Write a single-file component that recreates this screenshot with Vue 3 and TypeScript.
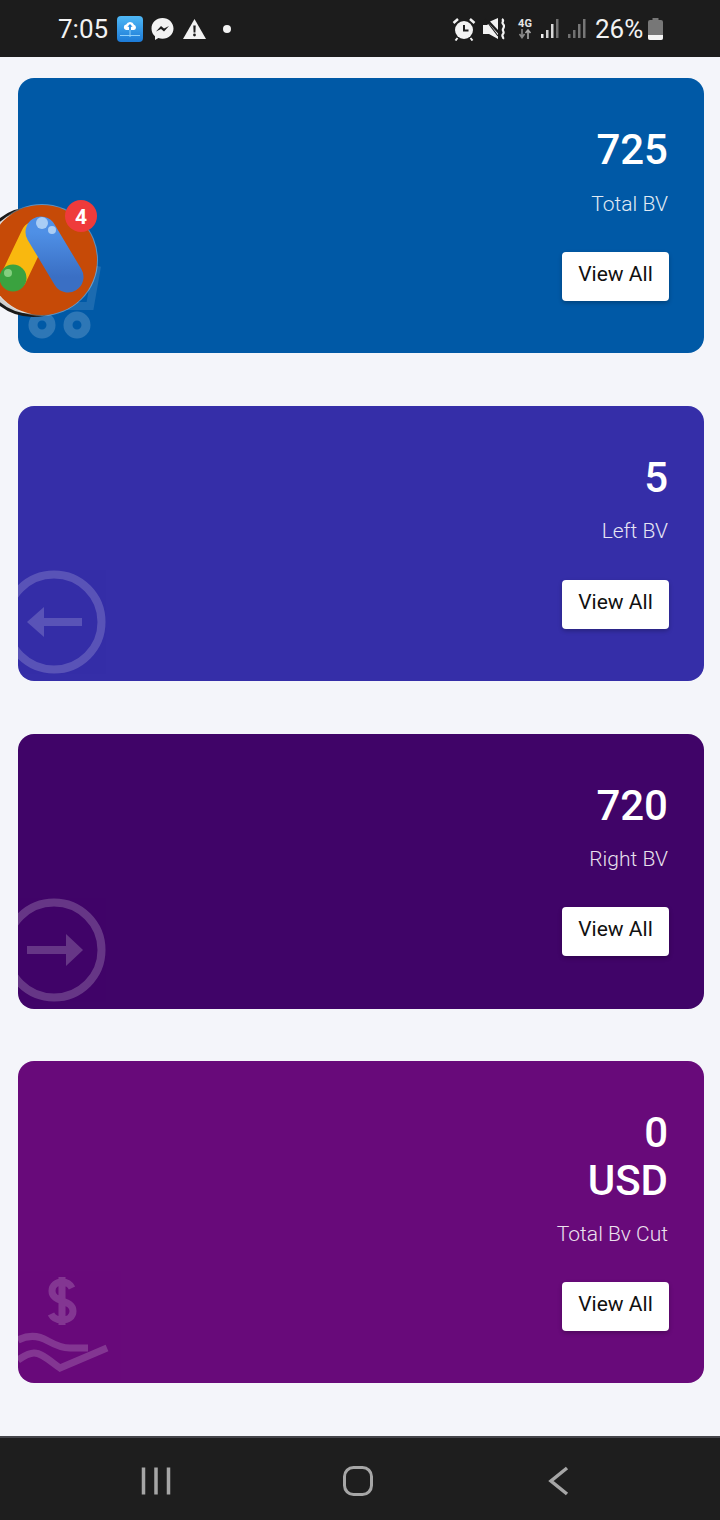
<script setup lang="ts">
interface Card {
  value: string[]
  label: string
  tone: string
  icon: 'cart' | 'left' | 'right' | 'money'
}
const cards: Card[] = [
  { value: ['725'], label: 'Total BV', tone: 'blue', icon: 'cart' },
  { value: ['5'], label: 'Left BV', tone: 'indigo', icon: 'left' },
  { value: ['720'], label: 'Right BV', tone: 'plum', icon: 'right' },
  { value: ['0', 'USD'], label: 'Total Bv Cut', tone: 'purple', icon: 'money' },
]
</script>

<template>
  <div class="screen">
    <header class="status">
      <div class="group left-group">
        <span class="clock">7:05</span>
        <svg class="ic-cloud" width="26" height="26" viewBox="0 0 26 26">
          <defs>
            <linearGradient id="cl" x1="0" y1="0" x2="0" y2="1">
              <stop offset="0" stop-color="#4fb8f6" />
              <stop offset="1" stop-color="#1c7ad6" />
            </linearGradient>
          </defs>
          <rect width="26" height="26" rx="4" fill="url(#cl)" />
          <path d="M9 14a2.800 2.800 0 0 1 .2-5.500A4.200 4.200 0 0 1 17 8.800a2.700 2.700 0 0 1 0 5.200z" fill="#fff" />
          <path d="M13 8l-2.600 2.800h1.700V14h1.800v-3.200h1.700z" fill="#2a8fe4" />
          <path d="M13 14v7M3 19.500h20" stroke="#8fd0fa" stroke-width="1" fill="none" />
        </svg>
        <svg class="ic-msg" width="23" height="24" viewBox="0 0 23 24">
          <path d="M11.500 1C5.300 1 .5 5.500.5 11.500c0 3.200 1.300 5.900 3.500 7.800V23l3.400-1.900c1.300.4 2.700.6 4.100.6 6.200 0 11-4.500 11-10.200S17.700 1 11.500 1z" fill="#f2f2f2" />
          <path d="M5 14.500l5-5.500 3 2.500 5-2.500-5 5.500-3-2.500z" fill="#1c1c1c" />
        </svg>
        <svg class="ic-warn" width="23" height="20" viewBox="0 0 23 20">
          <path d="M11.500 0L23 20H0z" fill="#f2f2f2" />
          <path d="M10.300 6.500h2.400l-.3 7h-1.800z" fill="#1c1c1c" />
          <circle cx="11.500" cy="16" r="1.400" fill="#1c1c1c" />
        </svg>
        <span class="dot"></span>
      </div>
      <div class="group right-group">
        <svg class="ic-alarm" width="24" height="24" viewBox="0 0 24 24">
          <circle cx="12" cy="13" r="9" fill="#f2f2f2" />
          <path d="M12 8v5.500h4.500" stroke="#1c1c1c" stroke-width="2" fill="none" />
          <path d="M1.500 6L6 2M22.500 6L18 2" stroke="#f2f2f2" stroke-width="2.500" fill="none" />
          <path d="M5.500 21l-2 2.500M18.500 21l2 2.500" stroke="#f2f2f2" stroke-width="2" fill="none" />
        </svg>
        <svg class="ic-mute" width="22" height="22" viewBox="0 0 22 22">
          <path d="M0 7h4L6 5.500l9 10V21L6 16H0z" fill="#f2f2f2" />
          <path d="M7 3.500L15 0v12z" fill="#f2f2f2" />
          <path d="M2 1l13 17" stroke="#1c1c1c" stroke-width="1.200" />
          <path d="M19 1c3 2-1 3 1 5s1 3 0 5 2 3 0 5 1 3 0 5" stroke="#f2f2f2" stroke-width="2.200" fill="none" />
        </svg>
        <div class="net">
          <span class="net-label">4G</span>
          <svg width="16" height="10" viewBox="0 0 16 10">
            <path d="M5 0v7M2.500 5L5 8.500 7.500 5" stroke="#8a8a8a" stroke-width="1.600" fill="none" />
            <path d="M11 10V2M8.500 4L11 1l2.500 3" stroke="#a8a8a8" stroke-width="1.600" fill="none" />
          </svg>
        </div>
        <svg class="ic-signal" width="19" height="21" viewBox="0 0 19 21">
          <rect x="0" y="16" width="2.500" height="4" fill="#f2f2f2" />
          <rect x="5" y="12" width="2.500" height="8" fill="#d0d0d0" />
          <rect x="10" y="6" width="2.500" height="14" fill="#d8d8d8" />
          <rect x="15" y="1" width="2.500" height="19" fill="#707070" />
        </svg>
        <svg class="ic-signal2" width="19" height="21" viewBox="0 0 19 21">
          <rect x="0" y="16" width="2.500" height="4" fill="#707070" />
          <rect x="5" y="12" width="2.500" height="8" fill="#707070" />
          <rect x="10" y="6" width="2.500" height="14" fill="#777" />
          <rect x="15" y="1" width="2.500" height="19" fill="#777" />
        </svg>
        <span class="pct">26%</span>
        <svg class="ic-batt" width="15" height="22" viewBox="0 0 15 22">
          <path d="M4.500 0h6v2h2.500a2 2 0 0 1 2 2v16a2 2 0 0 1-2 2H2a2 2 0 0 1-2-2V4a2 2 0 0 1 2-2h2.500z" fill="#777" />
          <path d="M0 17h15v3a2 2 0 0 1-2 2H2a2 2 0 0 1-2-2z" fill="#f4f4f4" />
        </svg>
      </div>
    </header>

    <main class="content">
      <section v-for="c in cards" :key="c.label" class="card" :class="c.tone">
        <svg v-if="c.icon === 'cart'" class="watermark cart" width="90" height="100" viewBox="0 0 90 100">
          <path d="M79 26l-7 40H20" stroke="#fff" stroke-opacity="0.6" stroke-width="8" fill="none" />
          <circle cx="24" cy="85" r="9" stroke="#fff" stroke-width="9" fill="none" />
          <circle cx="59" cy="85" r="9" stroke="#fff" stroke-width="9" fill="none" />
        </svg>
        <svg v-else-if="c.icon === 'left'" class="watermark arrow" width="104" height="104" viewBox="0 0 104 104">
          <circle cx="52" cy="52" r="47.500" stroke="#fff" stroke-width="8" fill="none" />
          <path d="M40 52h40" stroke="#fff" stroke-width="8" fill="none" />
          <path d="M25 52l17-15v30z" fill="#fff" />
        </svg>
        <svg v-else-if="c.icon === 'right'" class="watermark arrow" width="104" height="104" viewBox="0 0 104 104">
          <circle cx="52" cy="52" r="47.500" stroke="#fff" stroke-width="8" fill="none" />
          <path d="M25 52h40" stroke="#fff" stroke-width="8" fill="none" />
          <path d="M81 52L64 36v32z" fill="#fff" />
        </svg>
        <svg v-else class="watermark money" width="108" height="100" viewBox="0 0 108 100">
          <path d="M54 11c-2-4-5-6-10-6s-10 3-10 9c0 12 21 8 21 20 0 6-5 9-11 9s-9-2-11-6M44 0v48" stroke="#fff" stroke-width="7" fill="none" />
          <path d="M0 63c10-5 20-5 30 1 9 5 16 7 22 7h18" stroke="#fff" stroke-width="7" fill="none" />
          <path d="M0 83c6-4 11-7 16-7 8 0 16 8 26 15l47-20" stroke="#fff" stroke-width="7" fill="none" />
        </svg>

        <div class="value">
          <div v-for="v in c.value" :key="v">{{ v }}</div>
        </div>
        <div class="label">{{ c.label }}</div>
        <button class="view" type="button">View All</button>
      </section>
    </main>

    <nav class="nav">
      <svg width="30" height="30" viewBox="0 0 30 30">
        <path d="M2.500 1.500v27M15 1.500v27M27.500 1.500v27" stroke="#a6a6a6" stroke-width="3.500" fill="none" />
      </svg>
      <svg width="30" height="30" viewBox="0 0 30 30">
        <rect x="1.500" y="1.500" width="27" height="27" rx="9" stroke="#a6a6a6" stroke-width="3" fill="none" />
      </svg>
      <svg width="30" height="30" viewBox="0 0 30 30">
        <path d="M23 2L7 15l16 13" stroke="#a6a6a6" stroke-width="3.500" fill="none" />
      </svg>
    </nav>

    <div class="bubble" aria-hidden="true">
      <span class="bubble-back"></span>
      <span class="bubble-face">
        <svg width="110" height="110" viewBox="0 0 110 110">
          <defs>
            <linearGradient id="adsblue" x1="0" y1="0" x2="0" y2="1">
              <stop offset="0" stop-color="#4f90e6" />
              <stop offset="1" stop-color="#3a6fc4" />
            </linearGradient>
          </defs>
          <path d="M47 30L27 72" stroke="#f9b80f" stroke-width="26" stroke-linecap="round" fill="none" />
          <path d="M54 27L81 72" stroke="url(#adsblue)" stroke-width="31" stroke-linecap="round" fill="none" />
          <circle cx="55" cy="18" r="6" fill="#a9cdf5" />
          <circle cx="65" cy="25" r="4" fill="#a9cdf5" />
          <circle cx="26" cy="73" r="13.500" fill="#3aa23f" />
          <circle cx="21" cy="68" r="4" fill="#84cf7f" />
        </svg>
      </span>
      <span class="badge">4</span>
    </div>
  </div>
</template>

<style>
html, body { margin: 0; padding: 0; }
</style>

<style scoped>
.screen {
  position: relative;
  width: 720px;
  height: 1520px;
  overflow: hidden;
  display: flex;
  flex-direction: column;
  background: #f4f5fa;
  font-family: Roboto, "Liberation Sans", sans-serif;
}
.status {
  height: 57px;
  flex: none;
  background: #1c1c1c;
  color: #f2f2f2;
  display: flex;
  align-items: center;
  justify-content: space-between;
  padding: 0 57px 0 58px;
}
.group { display: flex; align-items: center; }
.clock { font-size: 26px; font-weight: 400; width: 50px; }
.ic-cloud { margin-left: 9px; }
.ic-msg { margin-left: 8px; }
.ic-warn { margin-left: 9px; }
.dot { width: 8px; height: 8px; border-radius: 50%; background: #f2f2f2; margin-left: 17px; }
.ic-mute { margin-left: 7px; }
.net { margin-left: 12px; width: 16px; display: flex; flex-direction: column; align-items: center; }
.net-label { font-size: 11px; font-weight: 700; line-height: 11px; color: #e6e6e6; }
.ic-signal { margin-left: 8px; }
.ic-signal2 { margin-left: 8px; }
.pct { font-size: 26px; font-weight: 400; margin-left: 8px; width: 49px; }
.ic-batt { margin-left: 4px; }

.content {
  flex: 1;
  padding: 21px 16px 0 18px;
  display: flex;
  flex-direction: column;
  gap: 52.8px;
}
.card {
  position: relative;
  overflow: hidden;
  border-radius: 16px;
  padding: 48px 36px 52.2px;
  display: flex;
  flex-direction: column;
  align-items: flex-end;
  color: #fff;
}
.blue { background: #0059a6; }
.indigo { background: #352ea8; }
.plum { background: #400468; }
.purple { background: #680a7a; }
.watermark { position: absolute; opacity: 0.18; }
.plum .watermark { opacity: 0.2; }
.cart { left: 0; bottom: 13px; }
.arrow { left: -16px; bottom: 7px; }
.money { left: 0; bottom: 6px; }
.value { font-size: 42px; font-weight: 500; line-height: 47.2px; text-align: right; }
.label { margin-top: 17.4px; font-size: 21px; font-weight: 300; line-height: 26px; opacity: 0.88; }
.view {
  margin-top: 35.2px;
  margin-right: -1px;
  width: 107px;
  height: 49px;
  border: 0;
  border-radius: 4px;
  background: #fff;
  color: #111;
  font-family: Roboto, "Liberation Sans", sans-serif;
  font-size: 21px;
  font-weight: 400;
  padding: 0 0 5px;
  box-shadow: 0 2px 4px rgba(0, 0, 0, 0.25);
}
.nav {
  height: 78px;
  flex: none;
  border-top: 2px solid #45454a;
  background: #1e1e1e;
  display: flex;
  align-items: center;
  justify-content: space-between;
  padding: 4px 146px 0 141px;
  box-sizing: content-box;
}
.bubble { position: absolute; left: -13px; top: 205px; width: 110px; height: 110px; }
.bubble-back {
  position: absolute;
  left: -9px;
  top: 2px;
  width: 110px;
  height: 110px;
  border-radius: 50%;
  background: #cfcfcf;
  border: 3px solid #1a1a1a;
  box-sizing: border-box;
}
.bubble-face {
  position: absolute;
  inset: 0;
  border-radius: 50%;
  background: #c64a07;
  box-shadow: 0 0 0 1px rgba(255, 255, 255, 0.35);
  overflow: hidden;
}
.badge {
  position: absolute;
  left: 78px;
  top: -5px;
  width: 32px;
  height: 32px;
  border-radius: 50%;
  background: #ef3b3b;
  color: #fff;
  font-size: 21px;
  font-weight: 700;
  line-height: 34px;
  text-align: center;
}
</style>
